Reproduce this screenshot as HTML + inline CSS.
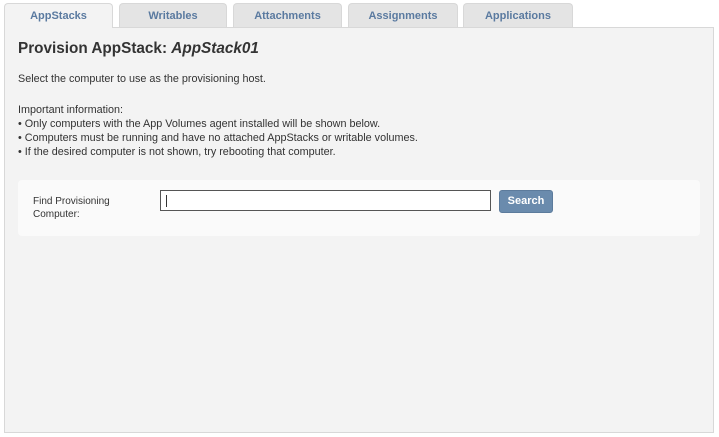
<!DOCTYPE html>
<html><head><style>
body{margin:0;width:719px;height:437px;background:#fff;font-family:"Liberation Sans",Arial,sans-serif;position:relative;overflow:hidden}
.tab{position:absolute;top:3px;height:24px;background:#e4e4e4;border:1px solid #d8d8d8;border-bottom:none;border-radius:4px 4px 0 0;box-sizing:border-box;text-align:center;font-size:11px;font-weight:bold;color:#5a7aa0;line-height:24px}
.tab.a{background:#f3f3f3;height:25px;z-index:2}
.panel{position:absolute;left:4px;top:27px;width:710px;height:406px;background:#f3f3f3;border:1px solid #d8d8d8;box-sizing:border-box}
h1{position:absolute;left:18px;top:40px;margin:0;font-size:15.3px;color:#333;font-weight:bold}
.t{position:absolute;left:18px;font-size:10.8px;color:#333;line-height:14px}
.box{position:absolute;left:18px;top:180px;width:682px;height:56px;background:#fafafa;border-radius:4px}
.lbl{position:absolute;left:33px;top:195px;font-size:10px;color:#333;line-height:13px}
.in{position:absolute;left:160px;top:190px;width:331px;height:21px;border:1px solid #555;box-sizing:border-box;background:#fff}
.in i{position:absolute;left:5px;top:4px;width:1px;height:12px;background:#333}
.btn{position:absolute;left:499px;top:190px;width:54px;height:23px;background:#6a8bad;border:1px solid #5c7b9c;border-radius:3px;box-sizing:border-box;color:#fff;font-size:11px;font-weight:bold;text-align:center;line-height:21px}
</style></head><body>
<div class="tab a" style="left:4px;width:109px">AppStacks</div>
<div class="tab" style="left:119px;width:108px">Writables</div>
<div class="tab" style="left:233px;width:109px">Attachments</div>
<div class="tab" style="left:348px;width:110px">Assignments</div>
<div class="tab" style="left:463px;width:110px">Applications</div>
<div class="panel"></div>
<h1>Provision AppStack: <i>AppStack01</i></h1>
<div class="t" style="top:72px">Select the computer to use as the provisioning host.</div>
<div class="t" style="top:103px">Important information:<br>• Only computers with the App Volumes agent installed will be shown below.<br>• Computers must be running and have no attached AppStacks or writable volumes.<br>• If the desired computer is not shown, try rebooting that computer.</div>
<div class="box"></div>
<div class="lbl">Find Provisioning<br>Computer:</div>
<div class="in"><i></i></div>
<div class="btn">Search</div>
</body></html>
